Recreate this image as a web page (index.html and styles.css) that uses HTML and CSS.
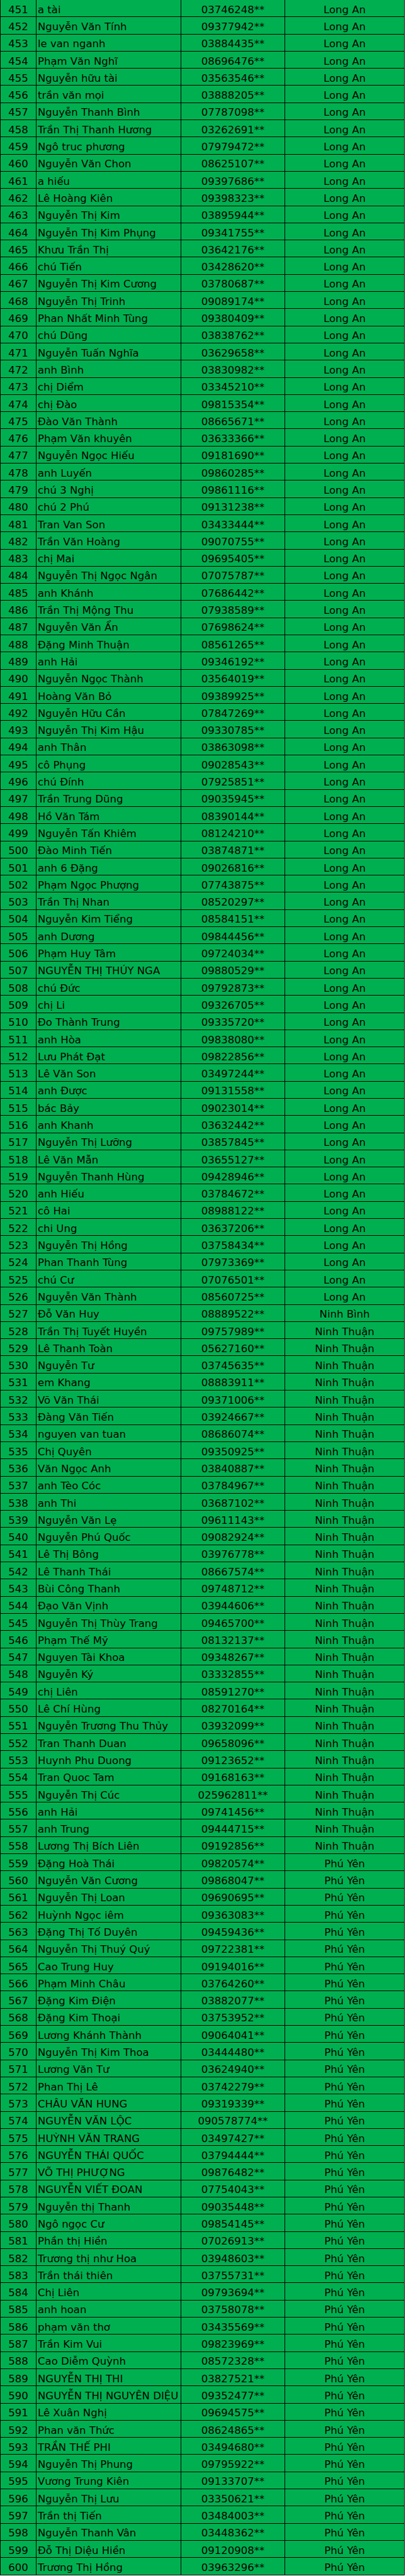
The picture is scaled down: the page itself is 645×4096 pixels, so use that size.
FILE: index.html
```html
<!DOCTYPE html>
<html lang="vi">
<head>
<meta charset="utf-8">
<title>Danh sách</title>
<link rel="stylesheet" href="styles.css">
</head>
<body>
<div class="sheet">
<div class="row"><div class="no">451</div><div class="name">a tài</div><div class="tel">03746248**</div><div class="prov">Long An</div></div>
<div class="row"><div class="no">452</div><div class="name">Nguyễn Văn Tính</div><div class="tel">09377942**</div><div class="prov">Long An</div></div>
<div class="row"><div class="no">453</div><div class="name">le van nganh</div><div class="tel">03884435**</div><div class="prov">Long An</div></div>
<div class="row"><div class="no">454</div><div class="name">Phạm Văn Nghĩ</div><div class="tel">08696476**</div><div class="prov">Long An</div></div>
<div class="row"><div class="no">455</div><div class="name">Nguyễn hữu tài</div><div class="tel">03563546**</div><div class="prov">Long An</div></div>
<div class="row"><div class="no">456</div><div class="name">trần văn mọi</div><div class="tel">03888205**</div><div class="prov">Long An</div></div>
<div class="row"><div class="no">457</div><div class="name">Nguyễn Thanh Bình</div><div class="tel">07787098**</div><div class="prov">Long An</div></div>
<div class="row"><div class="no">458</div><div class="name">Trần Thị Thanh Hương</div><div class="tel">03262691**</div><div class="prov">Long An</div></div>
<div class="row"><div class="no">459</div><div class="name">Ngô truc phương</div><div class="tel">07979472**</div><div class="prov">Long An</div></div>
<div class="row"><div class="no">460</div><div class="name">Nguyễn Văn Chon</div><div class="tel">08625107**</div><div class="prov">Long An</div></div>
<div class="row"><div class="no">461</div><div class="name">a hiếu</div><div class="tel">09397686**</div><div class="prov">Long An</div></div>
<div class="row"><div class="no">462</div><div class="name">Lê Hoàng Kiên</div><div class="tel">09398323**</div><div class="prov">Long An</div></div>
<div class="row"><div class="no">463</div><div class="name">Nguyễn Thị Kim</div><div class="tel">03895944**</div><div class="prov">Long An</div></div>
<div class="row"><div class="no">464</div><div class="name">Nguyễn Thị Kim Phụng</div><div class="tel">09341755**</div><div class="prov">Long An</div></div>
<div class="row"><div class="no">465</div><div class="name">Khưu Trần Thị</div><div class="tel">03642176**</div><div class="prov">Long An</div></div>
<div class="row"><div class="no">466</div><div class="name">chú Tiến</div><div class="tel">03428620**</div><div class="prov">Long An</div></div>
<div class="row"><div class="no">467</div><div class="name">Nguyễn Thị Kim Cương</div><div class="tel">03780687**</div><div class="prov">Long An</div></div>
<div class="row"><div class="no">468</div><div class="name">Nguyễn Thị Trinh</div><div class="tel">09089174**</div><div class="prov">Long An</div></div>
<div class="row"><div class="no">469</div><div class="name">Phan Nhất Minh Tùng</div><div class="tel">09380409**</div><div class="prov">Long An</div></div>
<div class="row"><div class="no">470</div><div class="name">chú Dũng</div><div class="tel">03838762**</div><div class="prov">Long An</div></div>
<div class="row"><div class="no">471</div><div class="name">Nguyễn Tuấn Nghĩa</div><div class="tel">03629658**</div><div class="prov">Long An</div></div>
<div class="row"><div class="no">472</div><div class="name">anh Bình</div><div class="tel">03830982**</div><div class="prov">Long An</div></div>
<div class="row"><div class="no">473</div><div class="name">chị Diểm</div><div class="tel">03345210**</div><div class="prov">Long An</div></div>
<div class="row"><div class="no">474</div><div class="name">chị Đào</div><div class="tel">09815354**</div><div class="prov">Long An</div></div>
<div class="row"><div class="no">475</div><div class="name">Đào Văn Thành</div><div class="tel">08665671**</div><div class="prov">Long An</div></div>
<div class="row"><div class="no">476</div><div class="name">Phạm Văn khuyên</div><div class="tel">03633366**</div><div class="prov">Long An</div></div>
<div class="row"><div class="no">477</div><div class="name">Nguyễn Ngọc Hiếu</div><div class="tel">09181690**</div><div class="prov">Long An</div></div>
<div class="row"><div class="no">478</div><div class="name">anh Luyến</div><div class="tel">09860285**</div><div class="prov">Long An</div></div>
<div class="row"><div class="no">479</div><div class="name">chú 3 Nghị</div><div class="tel">09861116**</div><div class="prov">Long An</div></div>
<div class="row"><div class="no">480</div><div class="name">chú 2 Phú</div><div class="tel">09131238**</div><div class="prov">Long An</div></div>
<div class="row"><div class="no">481</div><div class="name">Tran Van Son</div><div class="tel">03433444**</div><div class="prov">Long An</div></div>
<div class="row"><div class="no">482</div><div class="name">Trần Văn Hoàng</div><div class="tel">09070755**</div><div class="prov">Long An</div></div>
<div class="row"><div class="no">483</div><div class="name">chị Mai</div><div class="tel">09695405**</div><div class="prov">Long An</div></div>
<div class="row"><div class="no">484</div><div class="name">Nguyễn Thị Ngọc Ngân</div><div class="tel">07075787**</div><div class="prov">Long An</div></div>
<div class="row"><div class="no">485</div><div class="name">anh Khánh</div><div class="tel">07686442**</div><div class="prov">Long An</div></div>
<div class="row"><div class="no">486</div><div class="name">Trần Thị Mộng Thu</div><div class="tel">07938589**</div><div class="prov">Long An</div></div>
<div class="row"><div class="no">487</div><div class="name">Nguyễn Văn Ẩn</div><div class="tel">07698624**</div><div class="prov">Long An</div></div>
<div class="row"><div class="no">488</div><div class="name">Đặng Minh Thuận</div><div class="tel">08561265**</div><div class="prov">Long An</div></div>
<div class="row"><div class="no">489</div><div class="name">anh Hải</div><div class="tel">09346192**</div><div class="prov">Long An</div></div>
<div class="row"><div class="no">490</div><div class="name">Nguyễn Ngọc Thành</div><div class="tel">03564019**</div><div class="prov">Long An</div></div>
<div class="row"><div class="no">491</div><div class="name">Hoàng Văn Bỏ</div><div class="tel">09389925**</div><div class="prov">Long An</div></div>
<div class="row"><div class="no">492</div><div class="name">Nguyễn Hữu Cần</div><div class="tel">07847269**</div><div class="prov">Long An</div></div>
<div class="row"><div class="no">493</div><div class="name">Nguyễn Thị Kim Hậu</div><div class="tel">09330785**</div><div class="prov">Long An</div></div>
<div class="row"><div class="no">494</div><div class="name">anh Thân</div><div class="tel">03863098**</div><div class="prov">Long An</div></div>
<div class="row"><div class="no">495</div><div class="name">cô Phụng</div><div class="tel">09028543**</div><div class="prov">Long An</div></div>
<div class="row"><div class="no">496</div><div class="name">chú Đính</div><div class="tel">07925851**</div><div class="prov">Long An</div></div>
<div class="row"><div class="no">497</div><div class="name">Trần Trung Dũng</div><div class="tel">09035945**</div><div class="prov">Long An</div></div>
<div class="row"><div class="no">498</div><div class="name">Hồ Văn Tám</div><div class="tel">08390144**</div><div class="prov">Long An</div></div>
<div class="row"><div class="no">499</div><div class="name">Nguyễn Tấn Khiêm</div><div class="tel">08124210**</div><div class="prov">Long An</div></div>
<div class="row"><div class="no">500</div><div class="name">Đào Minh Tiến</div><div class="tel">03874871**</div><div class="prov">Long An</div></div>
<div class="row"><div class="no">501</div><div class="name">anh 6 Đặng</div><div class="tel">09026816**</div><div class="prov">Long An</div></div>
<div class="row"><div class="no">502</div><div class="name">Phạm Ngọc Phượng</div><div class="tel">07743875**</div><div class="prov">Long An</div></div>
<div class="row"><div class="no">503</div><div class="name">Trần Thị Nhan</div><div class="tel">08520297**</div><div class="prov">Long An</div></div>
<div class="row"><div class="no">504</div><div class="name">Nguyễn Kim Tiểng</div><div class="tel">08584151**</div><div class="prov">Long An</div></div>
<div class="row"><div class="no">505</div><div class="name">anh Dương</div><div class="tel">09844456**</div><div class="prov">Long An</div></div>
<div class="row"><div class="no">506</div><div class="name">Phạm Huy Tâm</div><div class="tel">09724034**</div><div class="prov">Long An</div></div>
<div class="row"><div class="no">507</div><div class="name">NGUYỄN THỊ THÚY NGA</div><div class="tel">09880529**</div><div class="prov">Long An</div></div>
<div class="row"><div class="no">508</div><div class="name">chú Đức</div><div class="tel">09792873**</div><div class="prov">Long An</div></div>
<div class="row"><div class="no">509</div><div class="name">chị Li</div><div class="tel">09326705**</div><div class="prov">Long An</div></div>
<div class="row"><div class="no">510</div><div class="name">Đo Thành Trung</div><div class="tel">09335720**</div><div class="prov">Long An</div></div>
<div class="row"><div class="no">511</div><div class="name">anh Hòa</div><div class="tel">09838080**</div><div class="prov">Long An</div></div>
<div class="row"><div class="no">512</div><div class="name">Lưu Phát Đạt</div><div class="tel">09822856**</div><div class="prov">Long An</div></div>
<div class="row"><div class="no">513</div><div class="name">Lê Văn Son</div><div class="tel">03497244**</div><div class="prov">Long An</div></div>
<div class="row"><div class="no">514</div><div class="name">anh Được</div><div class="tel">09131558**</div><div class="prov">Long An</div></div>
<div class="row"><div class="no">515</div><div class="name">bác Bảy</div><div class="tel">09023014**</div><div class="prov">Long An</div></div>
<div class="row"><div class="no">516</div><div class="name">anh Khanh</div><div class="tel">03632442**</div><div class="prov">Long An</div></div>
<div class="row"><div class="no">517</div><div class="name">Nguyễn Thị Lưỡng</div><div class="tel">03857845**</div><div class="prov">Long An</div></div>
<div class="row"><div class="no">518</div><div class="name">Lê Văn Mẫn</div><div class="tel">03655127**</div><div class="prov">Long An</div></div>
<div class="row"><div class="no">519</div><div class="name">Nguyễn Thanh Hùng</div><div class="tel">09428946**</div><div class="prov">Long An</div></div>
<div class="row"><div class="no">520</div><div class="name">anh Hiếu</div><div class="tel">03784672**</div><div class="prov">Long An</div></div>
<div class="row"><div class="no">521</div><div class="name">cô Hai</div><div class="tel">08988122**</div><div class="prov">Long An</div></div>
<div class="row"><div class="no">522</div><div class="name">chi Ung</div><div class="tel">03637206**</div><div class="prov">Long An</div></div>
<div class="row"><div class="no">523</div><div class="name">Nguyễn Thị Hồng</div><div class="tel">03758434**</div><div class="prov">Long An</div></div>
<div class="row"><div class="no">524</div><div class="name">Phan Thanh Tùng</div><div class="tel">07973369**</div><div class="prov">Long An</div></div>
<div class="row"><div class="no">525</div><div class="name">chú Cư</div><div class="tel">07076501**</div><div class="prov">Long An</div></div>
<div class="row"><div class="no">526</div><div class="name">Nguyễn Văn Thành</div><div class="tel">08560725**</div><div class="prov">Long An</div></div>
<div class="row"><div class="no">527</div><div class="name">Đỗ Văn Huy</div><div class="tel">08889522**</div><div class="prov">Ninh Bình</div></div>
<div class="row"><div class="no">528</div><div class="name">Trần Thị Tuyết Huyền</div><div class="tel">09757989**</div><div class="prov">Ninh Thuận</div></div>
<div class="row"><div class="no">529</div><div class="name">Lê Thanh Toàn</div><div class="tel">05627160**</div><div class="prov">Ninh Thuận</div></div>
<div class="row"><div class="no">530</div><div class="name">Nguyễn Tư</div><div class="tel">03745635**</div><div class="prov">Ninh Thuận</div></div>
<div class="row"><div class="no">531</div><div class="name">em Khang</div><div class="tel">08883911**</div><div class="prov">Ninh Thuận</div></div>
<div class="row"><div class="no">532</div><div class="name">Võ Văn Thái</div><div class="tel">09371006**</div><div class="prov">Ninh Thuận</div></div>
<div class="row"><div class="no">533</div><div class="name">Đàng Văn Tiến</div><div class="tel">03924667**</div><div class="prov">Ninh Thuận</div></div>
<div class="row"><div class="no">534</div><div class="name">nguyen van tuan</div><div class="tel">08686074**</div><div class="prov">Ninh Thuận</div></div>
<div class="row"><div class="no">535</div><div class="name">Chị Quyên</div><div class="tel">09350925**</div><div class="prov">Ninh Thuận</div></div>
<div class="row"><div class="no">536</div><div class="name">Văn Ngọc Anh</div><div class="tel">03840887**</div><div class="prov">Ninh Thuận</div></div>
<div class="row"><div class="no">537</div><div class="name">anh Tèo Cóc</div><div class="tel">03784967**</div><div class="prov">Ninh Thuận</div></div>
<div class="row"><div class="no">538</div><div class="name">anh Thi</div><div class="tel">03687102**</div><div class="prov">Ninh Thuận</div></div>
<div class="row"><div class="no">539</div><div class="name">Nguyễn Văn Lẹ</div><div class="tel">09611143**</div><div class="prov">Ninh Thuận</div></div>
<div class="row"><div class="no">540</div><div class="name">Nguyễn Phú Quốc</div><div class="tel">09082924**</div><div class="prov">Ninh Thuận</div></div>
<div class="row"><div class="no">541</div><div class="name">Lê Thị Bông</div><div class="tel">03976778**</div><div class="prov">Ninh Thuận</div></div>
<div class="row"><div class="no">542</div><div class="name">Lê Thanh Thái</div><div class="tel">08667574**</div><div class="prov">Ninh Thuận</div></div>
<div class="row"><div class="no">543</div><div class="name">Bùi Công Thanh</div><div class="tel">09748712**</div><div class="prov">Ninh Thuận</div></div>
<div class="row"><div class="no">544</div><div class="name">Đạo Văn Vịnh</div><div class="tel">03944606**</div><div class="prov">Ninh Thuận</div></div>
<div class="row"><div class="no">545</div><div class="name">Nguyễn Thị Thùy Trang</div><div class="tel">09465700**</div><div class="prov">Ninh Thuận</div></div>
<div class="row"><div class="no">546</div><div class="name">Phạm Thế Mỹ</div><div class="tel">08132137**</div><div class="prov">Ninh Thuận</div></div>
<div class="row"><div class="no">547</div><div class="name">Nguyen Tài Khoa</div><div class="tel">09348267**</div><div class="prov">Ninh Thuận</div></div>
<div class="row"><div class="no">548</div><div class="name">Nguyễn Ký</div><div class="tel">03332855**</div><div class="prov">Ninh Thuận</div></div>
<div class="row"><div class="no">549</div><div class="name">chị Liên</div><div class="tel">08591270**</div><div class="prov">Ninh Thuận</div></div>
<div class="row"><div class="no">550</div><div class="name">Lê Chí Hùng</div><div class="tel">08270164**</div><div class="prov">Ninh Thuận</div></div>
<div class="row"><div class="no">551</div><div class="name">Nguyễn Trương Thu Thủy</div><div class="tel">03932099**</div><div class="prov">Ninh Thuận</div></div>
<div class="row"><div class="no">552</div><div class="name">Tran Thanh Duan</div><div class="tel">09658096**</div><div class="prov">Ninh Thuận</div></div>
<div class="row"><div class="no">553</div><div class="name">Huynh Phu Duong</div><div class="tel">09123652**</div><div class="prov">Ninh Thuận</div></div>
<div class="row"><div class="no">554</div><div class="name">Tran Quoc Tam</div><div class="tel">09168163**</div><div class="prov">Ninh Thuận</div></div>
<div class="row"><div class="no">555</div><div class="name">Nguyễn Thị Cúc</div><div class="tel">025962811**</div><div class="prov">Ninh Thuận</div></div>
<div class="row"><div class="no">556</div><div class="name">anh Hải</div><div class="tel">09741456**</div><div class="prov">Ninh Thuận</div></div>
<div class="row"><div class="no">557</div><div class="name">anh Trung</div><div class="tel">09444715**</div><div class="prov">Ninh Thuận</div></div>
<div class="row"><div class="no">558</div><div class="name">Lương Thị Bích Liên</div><div class="tel">09192856**</div><div class="prov">Ninh Thuận</div></div>
<div class="row"><div class="no">559</div><div class="name">Đặng Hoà Thái</div><div class="tel">09820574**</div><div class="prov">Phú Yên</div></div>
<div class="row"><div class="no">560</div><div class="name">Nguyễn Văn Cương</div><div class="tel">09868047**</div><div class="prov">Phú Yên</div></div>
<div class="row"><div class="no">561</div><div class="name">Nguyễn Thị Loan</div><div class="tel">09690695**</div><div class="prov">Phú Yên</div></div>
<div class="row"><div class="no">562</div><div class="name">Huỳnh Ngọc iêm</div><div class="tel">09363083**</div><div class="prov">Phú Yên</div></div>
<div class="row"><div class="no">563</div><div class="name">Đặng Thị Tố Duyên</div><div class="tel">09459436**</div><div class="prov">Phú Yên</div></div>
<div class="row"><div class="no">564</div><div class="name">Nguyễn Thị Thuý Quý</div><div class="tel">09722381**</div><div class="prov">Phú Yên</div></div>
<div class="row"><div class="no">565</div><div class="name">Cao Trung Huy</div><div class="tel">09194016**</div><div class="prov">Phú Yên</div></div>
<div class="row"><div class="no">566</div><div class="name">Phạm Minh Châu</div><div class="tel">03764260**</div><div class="prov">Phú Yên</div></div>
<div class="row"><div class="no">567</div><div class="name">Đặng Kim Điện</div><div class="tel">03882077**</div><div class="prov">Phú Yên</div></div>
<div class="row"><div class="no">568</div><div class="name">Đặng Kim Thoại</div><div class="tel">03753952**</div><div class="prov">Phú Yên</div></div>
<div class="row"><div class="no">569</div><div class="name">Lương Khánh Thành</div><div class="tel">09064041**</div><div class="prov">Phú Yên</div></div>
<div class="row"><div class="no">570</div><div class="name">Nguyễn Thị Kim Thoa</div><div class="tel">03444480**</div><div class="prov">Phú Yên</div></div>
<div class="row"><div class="no">571</div><div class="name">Lương Văn Tư</div><div class="tel">03624940**</div><div class="prov">Phú Yên</div></div>
<div class="row"><div class="no">572</div><div class="name">Phan Thị Lê</div><div class="tel">03742279**</div><div class="prov">Phú Yên</div></div>
<div class="row"><div class="no">573</div><div class="name">CHÂU VĂN HUNG</div><div class="tel">09319339**</div><div class="prov">Phú Yên</div></div>
<div class="row"><div class="no">574</div><div class="name">NGUYỄN VĂN LỘC</div><div class="tel">090578774**</div><div class="prov">Phú Yên</div></div>
<div class="row"><div class="no">575</div><div class="name">HUỲNH VĂN TRANG</div><div class="tel">03497427**</div><div class="prov">Phú Yên</div></div>
<div class="row"><div class="no">576</div><div class="name">NGUYỄN THÁI QUỐC</div><div class="tel">03794444**</div><div class="prov">Phú Yên</div></div>
<div class="row"><div class="no">577</div><div class="name">VÕ THỊ PHƯỢNG</div><div class="tel">09876482**</div><div class="prov">Phú Yên</div></div>
<div class="row"><div class="no">578</div><div class="name">NGUYỄN VIẾT ĐOAN</div><div class="tel">07754043**</div><div class="prov">Phú Yên</div></div>
<div class="row"><div class="no">579</div><div class="name">Nguyễn thị Thanh</div><div class="tel">09035448**</div><div class="prov">Phú Yên</div></div>
<div class="row"><div class="no">580</div><div class="name">Ngô ngọc Cư</div><div class="tel">09854145**</div><div class="prov">Phú Yên</div></div>
<div class="row"><div class="no">581</div><div class="name">Phần thị Hiền</div><div class="tel">07026913**</div><div class="prov">Phú Yên</div></div>
<div class="row"><div class="no">582</div><div class="name">Trương thị như Hoa</div><div class="tel">03948603**</div><div class="prov">Phú Yên</div></div>
<div class="row"><div class="no">583</div><div class="name">Trần thái thiên</div><div class="tel">03755731**</div><div class="prov">Phú Yên</div></div>
<div class="row"><div class="no">584</div><div class="name">Chị Liên</div><div class="tel">09793694**</div><div class="prov">Phú Yên</div></div>
<div class="row"><div class="no">585</div><div class="name">anh hoan</div><div class="tel">03758078**</div><div class="prov">Phú Yên</div></div>
<div class="row"><div class="no">586</div><div class="name">phạm văn thơ</div><div class="tel">03435569**</div><div class="prov">Phú Yên</div></div>
<div class="row"><div class="no">587</div><div class="name">Trần Kim Vui</div><div class="tel">09823969**</div><div class="prov">Phú Yên</div></div>
<div class="row"><div class="no">588</div><div class="name">Cao Diễm Quỳnh</div><div class="tel">08572328**</div><div class="prov">Phú Yên</div></div>
<div class="row"><div class="no">589</div><div class="name">NGUYỄN THỊ THI</div><div class="tel">03827521**</div><div class="prov">Phú Yên</div></div>
<div class="row"><div class="no">590</div><div class="name">NGUYỄN THỊ NGUYÊN DIỆU</div><div class="tel">09352477**</div><div class="prov">Phú Yên</div></div>
<div class="row"><div class="no">591</div><div class="name">Lê Xuân Nghị</div><div class="tel">09694575**</div><div class="prov">Phú Yên</div></div>
<div class="row"><div class="no">592</div><div class="name">Phan văn Thức</div><div class="tel">08624865**</div><div class="prov">Phú Yên</div></div>
<div class="row"><div class="no">593</div><div class="name">TRẦN THẾ PHI</div><div class="tel">03494680**</div><div class="prov">Phú Yên</div></div>
<div class="row"><div class="no">594</div><div class="name">Nguyễn Thị Phung</div><div class="tel">09795922**</div><div class="prov">Phú Yên</div></div>
<div class="row"><div class="no">595</div><div class="name">Vương Trung Kiên</div><div class="tel">09133707**</div><div class="prov">Phú Yên</div></div>
<div class="row"><div class="no">596</div><div class="name">Nguyễn Thị Lưu</div><div class="tel">03350621**</div><div class="prov">Phú Yên</div></div>
<div class="row"><div class="no">597</div><div class="name">Trần thị Tiến</div><div class="tel">03484003**</div><div class="prov">Phú Yên</div></div>
<div class="row"><div class="no">598</div><div class="name">Nguyễn Thanh Vân</div><div class="tel">03448362**</div><div class="prov">Phú Yên</div></div>
<div class="row"><div class="no">599</div><div class="name">Đỗ Thị Diệu Hiền</div><div class="tel">09120908**</div><div class="prov">Phú Yên</div></div>
<div class="row"><div class="no">600</div><div class="name">Trương Thị Hồng</div><div class="tel">03963296**</div><div class="prov">Phú Yên</div></div>
</div>
</body>
</html>
```
FILE: styles.css
```css
html, body {
  margin: 0;
  padding: 0;
  background: #ffffff;
}

.sheet {
  width: 643px;
  box-sizing: border-box;
  border-left: 1px solid #000;
  font-family: "DejaVu Sans", "Liberation Sans", sans-serif;
  font-size: 16.5px;
  color: #000;
}

.row {
  display: grid;
  grid-template-columns: 57px 230px 165px 190px;
  height: 27.3px;
  box-sizing: border-box;
  border-bottom: 1px solid #000;
  background: #00b050;
}

.row > div {
  box-sizing: border-box;
  border-right: 1px solid #000;
  padding-top: 5.7px;
  line-height: 20px;
  white-space: nowrap;
  overflow: hidden;
}

.no,
.tel,
.prov {
  text-align: center;
}

.name {
  padding-left: 2px;
}
```
